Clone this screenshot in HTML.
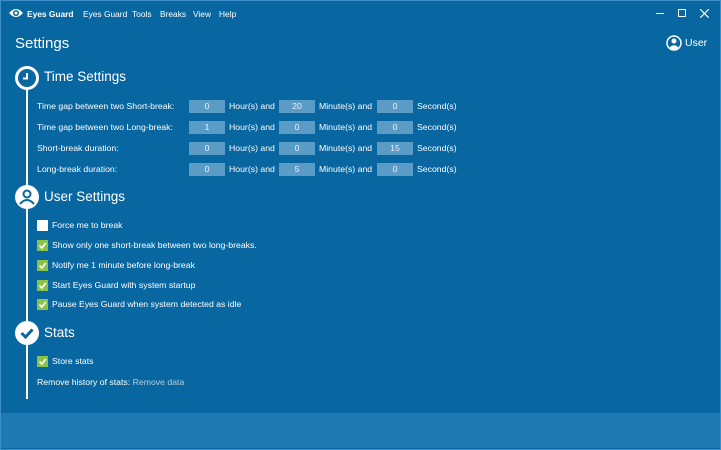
<!DOCTYPE html>
<html><head><meta charset="utf-8"><style>
*{margin:0;padding:0;box-sizing:border-box}
body{width:721px;height:450px;overflow:hidden;background:#3d8fca;font-family:"Liberation Sans",sans-serif;color:#fff;position:relative}
#win{position:absolute;left:1px;top:1px;width:719px;height:448px;background:#0866a0}
#foot{position:absolute;left:1px;top:413px;width:719px;height:35px;background:#1e79b2}
.a{position:absolute;white-space:nowrap}
.m{font-size:8.4px;top:9px}
.lbl{font-size:8.7px}
.box{position:absolute;width:36px;height:13px;background:#5b9cc6;font-size:8.7px;text-align:center;line-height:13px;color:#eef}
.cb{position:absolute;left:37px;width:11px;height:11px;background:#8bc34a}
.cb svg{display:block}
.cb.w{background:#fff}
h2{position:absolute;font-weight:normal;font-size:13.5px;left:44px}
</style></head><body>
<div id="win"></div><div id="foot"></div>
<svg class="a" style="left:8px;top:7px" width="16" height="12" viewBox="0 0 16 12"><path d="M1 6Q8 -2 15 6Q8 14 1 6Z" fill="#fff"/><circle cx="8" cy="6" r="3" fill="#0866a0"/><circle cx="8" cy="6" r="1.5" fill="#fff"/></svg>
<div class="a m" style="left:27px;font-weight:bold">Eyes Guard</div>
<div class="a m" style="left:83px">Eyes Guard</div>
<div class="a m" style="left:132px">Tools</div>
<div class="a m" style="left:160px">Breaks</div>
<div class="a m" style="left:193px">View</div>
<div class="a m" style="left:219px">Help</div>
<div class="a" style="left:656px;top:13px;width:8px;height:1px;background:#fff"></div>
<div class="a" style="left:678px;top:9px;width:8px;height:8px;border:1px solid #fff"></div>
<svg class="a" style="left:700px;top:9px" width="9" height="9"><path d="M0 0L9 9M9 0L0 9" stroke="#fff" stroke-width="1.2"/></svg>
<div class="a" style="left:15px;top:35px;font-size:15px">Settings</div>
<svg class="a" style="left:666px;top:35px" width="16" height="16" viewBox="0 0 16 16"><circle cx="8" cy="8" r="7" fill="none" stroke="#fff" stroke-width="1.5"/><circle cx="8" cy="6" r="2.5" fill="#fff"/><path d="M3.5 12.5Q8 8 12.5 12.5Q8 16 3.5 12.5Z" fill="#fff"/></svg>
<div class="a" style="left:685px;top:37px;font-size:10.5px">User</div>
<div class="a" style="left:26px;top:88px;width:2px;height:311px;background:#fff"></div>
<svg class="a" style="left:14px;top:65px" width="26" height="26"><circle cx="13" cy="13" r="10.5" fill="#0866a0" stroke="#fff" stroke-width="3"/><path d="M13 8V13.5H9" fill="none" stroke="#fff" stroke-width="2"/></svg>
<h2 style="top:69px">Time Settings</h2>
<svg class="a" style="left:14px;top:184px" width="26" height="26"><circle cx="13" cy="13" r="12" fill="#fff"/><circle cx="13" cy="10" r="3.5" fill="none" stroke="#0866a0" stroke-width="2"/><path d="M6 20Q13 12 20 20" fill="none" stroke="#0866a0" stroke-width="2"/></svg>
<h2 style="top:189px">User Settings</h2>
<svg class="a" style="left:14px;top:320px" width="26" height="26"><circle cx="13" cy="13" r="12" fill="#fff"/><path d="M7.5 13L11.5 17L18.5 9.5" fill="none" stroke="#0866a0" stroke-width="3"/></svg>
<h2 style="top:325px">Stats</h2>
<div class="a lbl" style="left:37px;top:101px">Time gap between two Short-break:</div>
<div class="a lbl" style="left:37px;top:122px">Time gap between two Long-break:</div>
<div class="a lbl" style="left:37px;top:143px">Short-break duration:</div>
<div class="a lbl" style="left:37px;top:164px">Long-break duration:</div>
<div class="box" style="left:189px;top:100px">0</div><div class="a lbl" style="left:229px;top:101px">Hour(s) and</div><div class="box" style="left:279px;top:100px">20</div><div class="a lbl" style="left:319px;top:101px">Minute(s) and</div><div class="box" style="left:377px;top:100px">0</div><div class="a lbl" style="left:417px;top:101px">Second(s)</div>
<div class="box" style="left:189px;top:121px">1</div><div class="a lbl" style="left:229px;top:122px">Hour(s) and</div><div class="box" style="left:279px;top:121px">0</div><div class="a lbl" style="left:319px;top:122px">Minute(s) and</div><div class="box" style="left:377px;top:121px">0</div><div class="a lbl" style="left:417px;top:122px">Second(s)</div>
<div class="box" style="left:189px;top:142px">0</div><div class="a lbl" style="left:229px;top:143px">Hour(s) and</div><div class="box" style="left:279px;top:142px">0</div><div class="a lbl" style="left:319px;top:143px">Minute(s) and</div><div class="box" style="left:377px;top:142px">15</div><div class="a lbl" style="left:417px;top:143px">Second(s)</div>
<div class="box" style="left:189px;top:163px">0</div><div class="a lbl" style="left:229px;top:164px">Hour(s) and</div><div class="box" style="left:279px;top:163px">5</div><div class="a lbl" style="left:319px;top:164px">Minute(s) and</div><div class="box" style="left:377px;top:163px">0</div><div class="a lbl" style="left:417px;top:164px">Second(s)</div>
<div class="cb w" style="top:220px"></div><div class="a lbl" style="left:52px;top:220px">Force me to break</div>
<div class="cb" style="top:240px"><svg width="11" height="11"><path d="M2.5 5.5L4.8 8L8.8 3" fill="none" stroke="#fff" stroke-width="1.6"/></svg></div><div class="a lbl" style="left:52px;top:240px">Show only one short-break between two long-breaks.</div>
<div class="cb" style="top:260px"><svg width="11" height="11"><path d="M2.5 5.5L4.8 8L8.8 3" fill="none" stroke="#fff" stroke-width="1.6"/></svg></div><div class="a lbl" style="left:52px;top:260px">Notify me 1 minute before long-break</div>
<div class="cb" style="top:280px"><svg width="11" height="11"><path d="M2.5 5.5L4.8 8L8.8 3" fill="none" stroke="#fff" stroke-width="1.6"/></svg></div><div class="a lbl" style="left:52px;top:280px">Start Eyes Guard with system startup</div>
<div class="cb" style="top:299px"><svg width="11" height="11"><path d="M2.5 5.5L4.8 8L8.8 3" fill="none" stroke="#fff" stroke-width="1.6"/></svg></div><div class="a lbl" style="left:52px;top:299px">Pause Eyes Guard when system detected as idle</div>
<div class="cb" style="top:356px"><svg width="11" height="11"><path d="M2.5 5.5L4.8 8L8.8 3" fill="none" stroke="#fff" stroke-width="1.6"/></svg></div><div class="a lbl" style="left:52px;top:356px">Store stats</div>
<div class="a lbl" style="left:37px;top:377px">Remove history of stats: <span style="color:#b8cfe0">Remove data</span></div>
</body></html>
